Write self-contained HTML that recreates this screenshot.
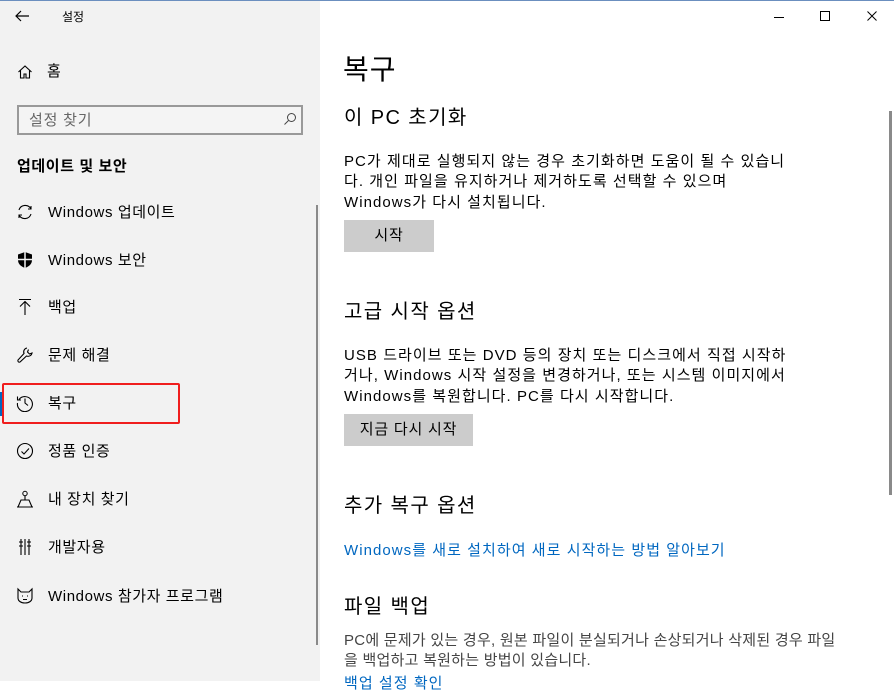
<!DOCTYPE html>
<html><head><meta charset="utf-8"><style>
*{margin:0;padding:0;box-sizing:border-box}
body{width:894px;height:681px;overflow:hidden;position:relative;background:#fff;font-family:"Liberation Sans","Noto Sans CJK KR",sans-serif;color:#000}
.side{position:absolute;left:0;top:0;width:320px;height:681px;background:#f2f2f2}
.a{position:absolute;white-space:nowrap}
.it{position:absolute;left:48px;font-size:15px;line-height:20px;letter-spacing:0.6px;white-space:nowrap}
.ic{position:absolute;left:16px;width:18px;height:18px}
.p{position:absolute;left:344px;font-size:15px;line-height:20.3px;color:#000;letter-spacing:1.05px;white-space:nowrap}
.h{position:absolute;left:344px;font-size:20px;line-height:26px;letter-spacing:1.4px}
.btn{position:absolute;left:344px;height:32px;background:#cccccc;font-size:15px;line-height:32px;text-align:center;letter-spacing:0.8px}
.lnk{color:#0067c0}
</style></head><body>
<div class="side"></div>
<div style="position:absolute;left:0;top:0;width:894px;height:1px;background:#6b8fbf;z-index:5"></div>
<svg class="a" style="left:14px;top:9px" width="16" height="14" viewBox="0 0 16 14"><path d="M15 7H2M7 2L2 7l5 5" fill="none" stroke="#000" stroke-width="1.2"/></svg>
<div class="a" style="left:62px;top:8px;font-size:12px">설정</div>
<svg class="a" style="left:17px;top:64px" width="16" height="16" viewBox="0 0 16 16"><path d="M1.5 8L8 2l6.5 6M3.5 6.5V14h3.5v-4h2v4h3.5V6.5" fill="none" stroke="#000" stroke-width="1.1"/></svg>
<div class="it" style="left:47px;top:62px">홈</div>
<div class="a" style="left:17px;top:105px;width:286px;height:30px;border:2px solid #999;background:#f4f4f4"></div>
<div class="a" style="left:29px;top:109px;font-size:15px;color:#666;letter-spacing:0.8px">설정 찾기</div>
<svg class="a" style="left:283px;top:112px" width="14" height="14" viewBox="0 0 14 14"><circle cx="8.5" cy="5.5" r="4" fill="none" stroke="#444"/><path d="M5.5 8.5L1.5 12.5" stroke="#444"/></svg>
<div class="a" style="left:17px;top:155px;font-size:15px;font-weight:bold;letter-spacing:0.6px">업데이트 및 보안</div>

<svg class="ic" style="top:203px" viewBox="0 0 18 18"><path d="M3 7a6.5 6.5 0 0 1 12-1M15 11a6.5 6.5 0 0 1-12 1M15 3v3h-3M3 15v-3h3" fill="none" stroke="#000" stroke-width="1.1"/></svg>
<div class="it" style="top:203px">Windows 업데이트</div>
<svg class="ic" style="top:251px" viewBox="0 0 18 18"><path d="M9 1L2 3.5V9c0 4 3 6.5 7 8 4-1.5 7-4 7-8V3.5z" fill="#000"/><path d="M9 1v16M2 8.5h14" stroke="#f2f2f2" stroke-width="1.5"/></svg>
<div class="it" style="top:251px">Windows 보안</div>
<svg class="ic" style="top:298px" viewBox="0 0 18 18"><path d="M3 1.5h12M9 17V3.5M4 8.5l5-5 5 5" fill="none" stroke="#000" stroke-width="1.1"/></svg>
<div class="it" style="top:298px">백업</div>
<svg class="ic" style="top:346px" viewBox="0 0 18 18"><path d="M11 2a4 4 0 0 0-3 5.5L2 14a1.5 1.5 0 0 0 2 2l6.5-6A4 4 0 0 0 16 7l-2.5 1-2-2 1-2.5" fill="none" stroke="#000" stroke-width="1.1"/></svg>
<div class="it" style="top:346px">문제 해결</div>
<div class="a" style="left:0;top:392px;width:3px;height:24px;background:#0067c0"></div>
<svg class="ic" style="top:394px" viewBox="0 0 18 18"><path d="M3 5.5A7.5 7.5 0 1 1 1.5 9M1.5 2.5v3.5H5M9 4.5V9l3 2.5" fill="none" stroke="#000" stroke-width="1.1"/></svg>
<div class="it" style="top:394px">복구</div>
<div class="a" style="left:2px;top:383px;width:178px;height:41px;border:2px solid #f01e1e;border-radius:2px"></div>
<svg class="ic" style="top:442px" viewBox="0 0 18 18"><circle cx="9" cy="9" r="7.5" fill="none" stroke="#000" stroke-width="1.1"/><path d="M5.5 9.5l2.5 2.5 5-5.5" fill="none" stroke="#000" stroke-width="1.1"/></svg>
<div class="it" style="top:442px">정품 인증</div>
<svg class="ic" style="top:490px" viewBox="0 0 18 18"><circle cx="9" cy="3.5" r="2.2" fill="none" stroke="#000"/><path d="M9 5.7V10M2 17l3-7h8l3 7zM1 17h16" fill="none" stroke="#000" stroke-width="1.1"/></svg>
<div class="it" style="top:490px">내 장치 찾기</div>
<svg class="ic" style="top:538px" viewBox="0 0 18 18"><path d="M5 1v16M9 1v16M13 1v16M3 4h4M11 4h4M3 8h4M11 8h4" fill="none" stroke="#000" stroke-width="1.1"/></svg>
<div class="it" style="top:538px">개발자용</div>
<svg class="ic" style="top:587px" viewBox="0 0 18 18"><path d="M2 2l3 3h8l3-3v9c0 3-3 5-7 5s-7-2-7-5zM6 9h1M11 9h1M7 12.5h4" fill="none" stroke="#000" stroke-width="1.1"/></svg>
<div class="it" style="top:587px">Windows 참가자 프로그램</div>
<div class="a" style="left:316px;top:205px;width:2px;height:440px;background:#8a8a8a"></div>

<svg class="a" style="left:772px;top:10px" width="110" height="14" viewBox="0 0 110 14"><path d="M2 7.5h10" stroke="#000"/><rect x="48.5" y="1.5" width="9" height="9" fill="none" stroke="#000"/><path d="M95.5 1.5l9 9M104.5 1.5l-9 9" stroke="#000"/></svg>
<div class="a" style="left:889px;top:111px;width:3px;height:384px;background:#8a8a8a"></div>

<div class="a" style="left:343px;top:53px;font-size:28px;line-height:34px;letter-spacing:1px">복구</div>
<div class="h" style="top:105px">이 PC 초기화</div>
<div class="p" style="top:152px">PC가 제대로 실행되지 않는 경우 초기화하면 도움이 될 수 있습니<br>다. 개인 파일을 유지하거나 제거하도록 선택할 수 있으며<br>Windows가 다시 설치됩니다.</div>
<div class="btn" style="top:220px;width:90px">시작</div>
<div class="h" style="top:299px">고급 시작 옵션</div>
<div class="p" style="top:346px">USB 드라이브 또는 DVD 등의 장치 또는 디스크에서 직접 시작하<br>거나, Windows 시작 설정을 변경하거나, 또는 시스템 이미지에서<br>Windows를 복원합니다. PC를 다시 시작합니다.</div>
<div class="btn" style="top:414px;width:129px">지금 다시 시작</div>
<div class="h" style="top:493px">추가 복구 옵션</div>
<div class="p lnk" style="top:541px">Windows를 새로 설치하여 새로 시작하는 방법 알아보기</div>
<div class="h" style="top:594px">파일 백업</div>
<div class="p" style="top:631px;color:#444;letter-spacing:0.25px">PC에 문제가 있는 경우, 원본 파일이 분실되거나 손상되거나 삭제된 경우 파일<br>을 백업하고 복원하는 방법이 있습니다.</div>
<div class="p lnk" style="top:674px">백업 설정 확인</div>
</body></html>
